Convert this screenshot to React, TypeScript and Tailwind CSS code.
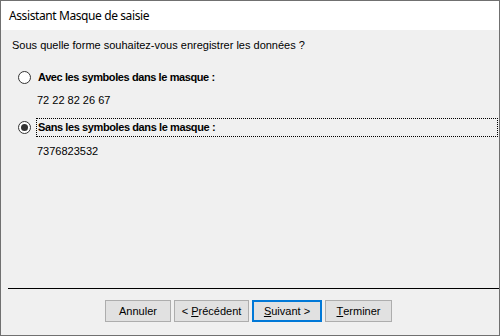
import React from "react";

const body = { fontFamily: '"Liberation Sans", Arial, sans-serif' };

function Radio({ checked }: { checked?: boolean }) {
  return (
    <div className="w-[13px] h-[13px] rounded-full border border-[#333333] bg-white flex items-center justify-center shrink-0">
      {checked && <div className="w-[7px] h-[7px] rounded-full bg-[#333333]" />}
    </div>
  );
}

function Btn({ w, children, focus }: { w: string; children: React.ReactNode; focus?: boolean }) {
  return (
    <div
      className={
        "h-[22px] flex items-center justify-center bg-[#e1e1e1] text-[11px] text-black " +
        w +
        (focus ? " border-2 border-[#0078d7]" : " border border-[#adadad]")
      }
    >
      {children}
    </div>
  );
}

export default function App() {
  return (
    <div className="w-[500px] h-[336px] border border-[#707070] bg-[#f0f0f0] flex flex-col" style={body}>
      <div
        className="h-[29px] bg-white pl-[8px] flex items-center text-[12px] tracking-[-0.4px] text-black"
        style={{ fontFamily: '"Noto Sans", "Open Sans", sans-serif' }}
      >
        Assistant Masque de saisie
      </div>
      <div className="flex-1 flex flex-col pl-[11px] pr-[1px] text-[11px] leading-[13px] text-black">
        <div className="mt-[9px]">Sous quelle forme souhaitez-vous enregistrer les données ?</div>
        <div className="mt-[16px] h-[19px] flex items-center">
          <div className="ml-[6px] mr-[5px]">
            <Radio />
          </div>
          <div className="flex-1 h-[19px] flex items-center pl-px border border-transparent font-bold tracking-[-0.4px]">
            Avec les symboles dans le masque :
          </div>
        </div>
        <div className="mt-[7px] pl-[25px]">72 22 82 26 67</div>
        <div className="mt-[11px] h-[19px] flex items-center">
          <div className="ml-[6px] mr-[5px]">
            <Radio checked />
          </div>
          <div className="flex-1 h-[19px] flex items-center pl-px border border-dotted border-black font-bold tracking-[-0.4px]">
            Sans les symboles dans le masque :
          </div>
        </div>
        <div className="mt-[8px] pl-[25px]">7376823532</div>
      </div>
      <div className="h-px bg-black ml-[7px]" />
      <div className="h-[46px] pt-[11px] pl-[104px] flex gap-[3px]">
        <Btn w="w-[66px]">Annuler</Btn>
        <Btn w="w-[75px]">
          &lt;&nbsp;<span className="underline">P</span>récédent
        </Btn>
        <Btn w="w-[70px]" focus>
          <span className="underline">S</span>uivant &gt;
        </Btn>
        <Btn w="w-[67px]">
          <span className="underline">T</span>erminer
        </Btn>
      </div>
    </div>
  );
}
